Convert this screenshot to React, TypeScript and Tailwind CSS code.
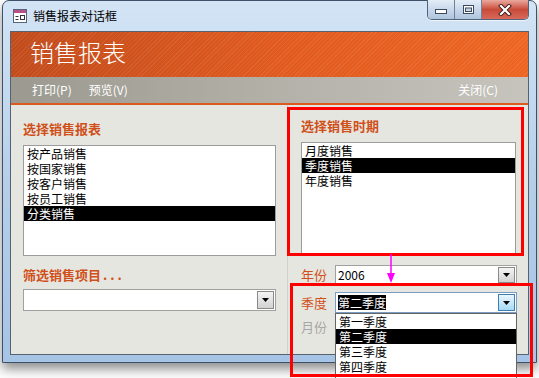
import React from "react";

function DropBtn({ active }: { active?: boolean }) {
  return (
    <div
      className={
        active
          ? "w-[17px] h-full border border-[#3c7fb1] bg-gradient-to-b from-[#eaf6fd] to-[#a7d9f5] flex items-center justify-center"
          : "w-[17px] h-full border border-[#8a8a8a] bg-gradient-to-b from-[#f4f4f4] to-[#d2d2d2] flex items-center justify-center"
      }
    >
      <svg width="7" height="4" viewBox="0 0 7 4">
        <path d="M0 0H7L3.5 4Z" fill="#000" />
      </svg>
    </div>
  );
}

function ListRow({ text, sel }: { text: string; sel?: boolean }) {
  return (
    <div
      className={
        sel
          ? "h-[15px] leading-[15px] text-[12px] pl-[3px] bg-black text-white overflow-hidden"
          : "h-[15px] leading-[15px] text-[12px] pl-[3px] text-black overflow-hidden"
      }
    >
      {text}
    </div>
  );
}

export default function App() {
  return (
    <div className="relative w-[539px] h-[378px] bg-white overflow-hidden font-['Noto_Sans_CJK_SC','Noto_Sans',sans-serif]">
      {/* window */}
      <div className="ml-[2px] w-[535px] h-[363px] rounded-t-[7px] border border-[#3f5168] bg-gradient-to-b from-[#d3e4f5] via-[#b5cfea] to-[#a6c4e5] shadow-[0_6px_12px_rgba(0,0,0,0.45)] flex flex-col">
        {/* title bar */}
        <div className="h-[30px] flex items-start">
          <div className="flex items-center h-[30px] pl-[10px]">
            <svg width="14" height="14" viewBox="0 0 14 14">
              <rect x="0.5" y="0.5" width="13" height="13" fill="#fff" stroke="#55657a" />
              <rect x="1" y="1" width="12" height="3" fill="#b9508a" />
              <path d="M2.5 7.5H5.5M2.5 10.5H5.5" stroke="#334" />
              <rect x="7.5" y="6.5" width="4" height="4" fill="#fff" stroke="#334" />
            </svg>
            <span className="ml-[6px] text-[12px] text-black leading-[14px]">销售报表对话框</span>
          </div>
          <div className="flex-1" />
          {/* caption buttons */}
          <div className="mr-[7px] mt-[-1px] flex h-[20px] rounded-b-[5px] border border-t-0 border-[#52647c] overflow-hidden shadow-[0_1px_0_rgba(255,255,255,0.6)]">
            <div className="w-[27px] h-full bg-gradient-to-b from-[#e4edf7] via-[#c9d8ea] to-[#aec4de] border-r border-[#6f829a] flex items-center justify-center">
              <svg width="12" height="6" viewBox="0 0 12 6" className="mt-[5px]">
                <rect x="0.5" y="0.5" width="11" height="4" fill="#fff" stroke="#3b4a5e" />
              </svg>
            </div>
            <div className="w-[27px] h-full bg-gradient-to-b from-[#e4edf7] via-[#c9d8ea] to-[#aec4de] border-r border-[#6f829a] flex items-center justify-center">
              <svg width="11" height="9" viewBox="0 0 11 9">
                <rect x="0.5" y="0.5" width="10" height="8" fill="#fff" stroke="#3b4a5e" />
                <rect x="2.5" y="3" width="6" height="3.5" fill="#c8d6e6" stroke="#3b4a5e" />
              </svg>
            </div>
            <div className="w-[46px] h-full bg-gradient-to-b from-[#e9a89e] via-[#c84a3a] to-[#d8695a] flex items-center justify-center">
              <svg width="14" height="12" viewBox="0 0 14 12">
                <path d="M3 2L11 10M11 2L3 10" stroke="#3a1a16" strokeWidth="4" strokeLinecap="square" />
                <path d="M3 2L11 10M11 2L3 10" stroke="#fff" strokeWidth="2.2" strokeLinecap="square" />
              </svg>
            </div>
          </div>
        </div>

        {/* client area */}
        <div className="mx-[7px] h-[324px] border border-[#56636f] bg-[#e6e6e0] flex flex-col">
          {/* orange header */}
          <div className="relative h-[45px] bg-gradient-to-r from-[#c24b1b] via-[#e05a1f] to-[#ee6522] flex items-center pl-[19px]">
            <div className="absolute inset-0 bg-[repeating-linear-gradient(135deg,rgba(255,255,255,0.07)_0px,rgba(255,255,255,0.07)_1px,transparent_1px,transparent_3px)]" />
            <span className="relative text-[24px] font-light text-white leading-[30px] mb-[5px]">销售报表</span>
          </div>
          {/* toolbar */}
          <div className="h-[26px] bg-gradient-to-r from-[#9c9a90] via-[#b2b0a7] to-[#c6c4bd] flex items-center text-[12px] text-white">
            <span className="ml-[21px]">打印(P)</span>
            <span className="ml-[17px]">预览(V)</span>
            <span className="ml-auto mr-[30px]">关闭(C)</span>
          </div>
          <div className="h-[2px] bg-[#dc5a1e]" />

          {/* body */}
          <div className="flex-1 flex">
            {/* left column */}
            <div className="w-[276px] pl-[12px] pt-[16px]">
              <div className="text-[13px] font-bold leading-[16px] text-[#d0501a]">选择销售报表</div>
              <div className="mt-[8px] w-[253px] h-[111px] border border-[#9c9c9c] bg-white">
                <ListRow text="按产品销售" />
                <ListRow text="按国家销售" />
                <ListRow text="按客户销售" />
                <ListRow text="按员工销售" />
                <ListRow text="分类销售" sel />
              </div>
              <div className="mt-[11px] text-[13px] font-bold leading-[16px] text-[#d0501a]">
                筛选销售项目<span className="tracking-[3px] pl-[2px]">...</span>
              </div>
              <div className="mt-[6px] w-[253px] h-[22px] border border-[#a0a0a0] bg-white flex p-px">
                <div className="flex-1" />
                <DropBtn />
              </div>
            </div>

            {/* right column */}
            <div className="flex-1 border-l border-[#d2d2ca] pl-[13px] pt-[13px]">
              <div className="text-[13px] font-bold leading-[16px] text-[#d0501a]">选择销售时期</div>
              <div className="mt-[8px] w-[215px] h-[112px] border border-[#9c9c9c] bg-white">
                <ListRow text="月度销售" />
                <ListRow text="季度销售" sel />
                <ListRow text="年度销售" />
              </div>

              <div className="mt-[11px] flex items-center h-[20px]">
                <span className="w-[34px] text-[13px] text-[#d0501a] leading-[16px]">年份</span>
                <div className="w-[182px] h-[20px] border border-[#a0a0a0] bg-white flex p-px">
                  <span className="flex-1 text-[12px] leading-[16px] pl-[1px] text-black">2006</span>
                  <DropBtn />
                </div>
              </div>

              <div className="mt-[7px] flex items-center h-[21px]">
                <span className="w-[34px] text-[13px] text-[#d0501a] leading-[16px]">季度</span>
                <div className="w-[182px] h-[21px] border border-[#7a9cc0] bg-white flex p-px">
                  <div className="flex-1 flex items-center pl-px">
                    <span className="bg-black text-white text-[12px] leading-[15px]">第二季度</span>
                  </div>
                  <DropBtn active />
                </div>
              </div>

              <div className="mt-[4px] flex items-center h-[20px]">
                <span className="w-[34px] text-[13px] text-[#a6a6a6] leading-[16px]">月份</span>
                <div className="w-[182px] h-[20px] border border-[#c0c0c0] bg-white" />
              </div>
            </div>
          </div>
        </div>
      </div>

      {/* dropdown popup */}
      <div className="absolute left-[335px] top-[313px] w-[182px] h-[66px] border border-[#646464] bg-white">
        <ListRow text="第一季度" />
        <ListRow text="第二季度" sel />
        <ListRow text="第三季度" />
        <ListRow text="第四季度" />
      </div>

      {/* annotations */}
      <div className="absolute left-[287px] top-[107px] w-[237px] h-[149px] border-[3px] border-[#ff0000]" />
      <div className="absolute left-[290px] top-[283px] w-[243px] h-[94px] border-[3px] border-[#ff0000]" />
      <svg className="absolute left-[384px] top-[254px]" width="14" height="30" viewBox="0 0 14 30">
        <path d="M7 0V21" stroke="#ff00ff" strokeWidth="1.5" />
        <path d="M3 19H11L7 29Z" fill="#ff00ff" />
      </svg>
    </div>
  );
}
